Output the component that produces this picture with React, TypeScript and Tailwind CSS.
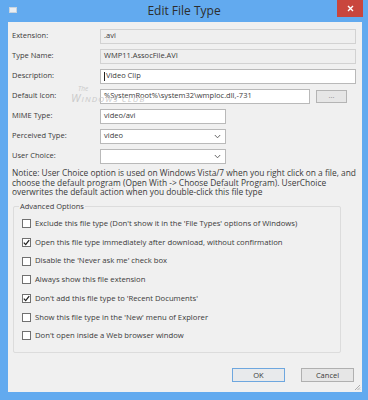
import React from "react";

const fieldBase = "h-[15px] border px-[3px] flex items-center whitespace-nowrap overflow-hidden";
const editable = `${fieldBase} bg-white border-[#b9b9b9]`;
const readonly = `${fieldBase} bg-[#efefef] border-[#d2d2d2]`;

function Chevron() {
  return (
    <svg width="7" height="5" viewBox="0 0 7 5" className="ml-auto mr-[1px]">
      <path d="M0.8 1 L3.5 3.8 L6.2 1" fill="none" stroke="#555" strokeWidth="0.9" />
    </svg>
  );
}

function Row({ label, children }: { label: string; children: React.ReactNode }) {
  return (
    <div className="flex items-center h-[16px]">
      <span className="w-[88px] shrink-0">{label}</span>
      {children}
    </div>
  );
}

function Check({ checked, label }: { checked?: boolean; label: string }) {
  return (
    <div className="flex items-center h-[18.7px] gap-[4px]">
      <span className="w-[9px] h-[9px] border border-[#707070] bg-white flex items-center justify-center shrink-0">
        {checked && (
          <svg width="7" height="7" viewBox="0 0 7 7">
            <path d="M0.8 3.6 L2.7 5.6 L6.2 1.2" fill="none" stroke="#222" strokeWidth="1.3" />
          </svg>
        )}
      </span>
      <span className="whitespace-nowrap text-[7.7px]">{label}</span>
    </div>
  );
}

const options = [
  { label: "Exclude  this file type (Don't show it in the 'File Types' options of Windows)" },
  { label: "Open this file type immediately after download, without confirmation", checked: true },
  { label: "Disable the 'Never ask me' check box" },
  { label: "Always show this file extension" },
  { label: "Don't add this file type to 'Recent Documents'", checked: true },
  { label: "Show this file type in the 'New' menu of Explorer" },
  { label: "Don't open inside a Web browser window" },
];

export default function App() {
  return (
    <div className="w-[368px] h-[400px] bg-[#62aaef] flex flex-col font-['Open_Sans',sans-serif] text-[7.5px] text-[#3a3a3a]">
      <div className="h-[22px] grid grid-cols-[1fr_auto_1fr] items-start">
        <div className="pl-[9px] pt-[7px]">
          <div className="w-[8px] h-[6px] bg-[#e9eef3] border border-[#c8d4df]" />
        </div>
        <div className="text-[12px] text-[#2d2d2d] pt-[3px] leading-[16px]">Edit File Type</div>
        <div className="flex justify-end pr-[5px]">
          <div className="w-[26px] h-[17px] bg-[#c9463d] flex items-center justify-center">
            <svg width="7" height="7" viewBox="0 0 7 7">
              <path d="M1 1 L6 6 M6 1 L1 6" stroke="#fff" strokeWidth="1.4" />
            </svg>
          </div>
        </div>
      </div>

      <div className="relative flex-1 ml-[8px] mr-[6px] mb-[8px] bg-[#f0f0f0] pt-[6px] px-[4px] flex flex-col">
        <div className="flex flex-col gap-[4px]">
          <Row label="Extension:">
            <div className={`${readonly} w-[256px]`}>.avi</div>
          </Row>
          <Row label="Type Name:">
            <div className={`${readonly} w-[256px]`}>WMP11.AssocFile.AVI</div>
          </Row>
          <Row label="Description:">
            <div className={`${editable} w-[256px]`}>
              <span className="w-px h-[9px] bg-[#222] mr-[1px]" />
              Video Clip
            </div>
          </Row>
          <Row label="Default Icon:">
            <div className={`${editable} w-[210px]`}>%SystemRoot%\system32\wmploc.dll,-731</div>
            <div className="ml-[6px] w-[31px] h-[13px] border border-[#b4b4b4] bg-[#e6e6e6] flex items-center justify-center text-[#888]">
              ...
            </div>
          </Row>
          <Row label="MIME Type:">
            <div className={`${editable} w-[126px]`}>video/avi</div>
          </Row>
          <Row label="Perceived Type:">
            <div className={`${editable} w-[126px]`}>
              video
              <Chevron />
            </div>
          </Row>
          <Row label="User Choice:">
            <div className={`${editable} w-[126px]`}>
              <Chevron />
            </div>
          </Row>
        </div>

        <p className="mt-[4px] leading-[9.5px] whitespace-nowrap text-[8.4px]">
          Notice: User Choice option is used on Windows Vista/7 when you right click on a file, and
          <br />
          choose the default program (Open With -&gt; Choose Default Program). UserChoice
          <br />
          overwrites the default action when you double-click this file type
        </p>

        <div className="relative mt-[9px] ml-[1px] w-[328px] border border-[#dcdcdc] rounded-[2px] pt-[8px] pb-[7px] pl-[8px]">
          <span className="absolute -top-[6px] left-[5px] bg-[#f0f0f0] px-[1px] leading-[11px]">Advanced Options</span>
          {options.map((o) => (
            <Check key={o.label} label={o.label} checked={o.checked} />
          ))}
        </div>

        <div className="mt-[15px] flex justify-end gap-[16px] pr-[4px]">
          <div className="w-[53px] h-[14px] border border-[#6ea7df] bg-[#e8eaec] flex items-center justify-center">OK</div>
          <div className="w-[53px] h-[14px] border border-[#b0b0b0] bg-[#e6e6e6] flex items-center justify-center">Cancel</div>
        </div>

        <svg width="8" height="8" viewBox="0 0 8 8" className="absolute right-[1px] bottom-[1px]">
          <path d="M7 2 L2 7 M7 4.5 L4.5 7 M7 6.5 L6.5 7" stroke="#9a9a9a" strokeWidth="0.8" />
        </svg>

        <div className="absolute left-[63px] top-[62px] text-[#c9c9c9] italic leading-[9px] pointer-events-none">
          <div className="pl-[7px] text-[6.5px]">The</div>
          <div className="text-[8px] tracking-[1.2px] whitespace-nowrap">
            <span className="text-[11px]">W</span>INDOWS CLUB
          </div>
        </div>
      </div>
    </div>
  );
}
